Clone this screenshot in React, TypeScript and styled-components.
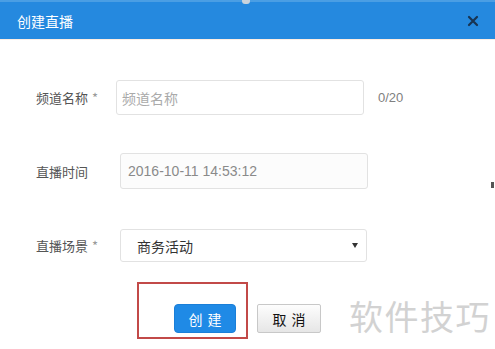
import React from "react";
import styled, { createGlobalStyle } from "styled-components";

const Global = createGlobalStyle`
  html, body { margin: 0; padding: 0; background: #fff; }
  body { font-family: "Noto Sans CJK SC", "Liberation Sans", sans-serif; overflow: hidden; }
`;

const Dialog = styled.div`
  position: relative;
  width: 495px;
  height: 349px;
  background: #fff;
  overflow: hidden;
`;

const TopStrip = styled.div`
  height: 2px;
  background: #4a9ee4;
  position: relative;
`;

const Notch = styled.div`
  position: absolute;
  left: 242px;
  top: 0;
  width: 8px;
  height: 4px;
  background: #c9d3dc;
  border-radius: 0 0 3px 3px;
`;

const Header = styled.div`
  height: 37px;
  background: #2589df;
  display: flex;
  align-items: center;
  justify-content: space-between;
  padding: 0 16px 0 17px;
  border-bottom: 1px solid #fdeee4;
`;

const Title = styled.span`
  color: #fff;
  font-size: 14px;
`;

const Close = styled.span`
  display: flex;
  width: 12px;
  height: 12px;
`;

const Body = styled.div`
  display: flex;
  flex-direction: column;
  padding-top: 40px;
`;

const Row = styled.div<{ $mt: number }>`
  display: flex;
  align-items: center;
  padding-left: 36px;
  margin-top: ${(p) => p.$mt}px;
`;

const Label = styled.span<{ $w: number }>`
  width: ${(p) => p.$w}px;
  font-size: 13px;
  color: #555;
  white-space: nowrap;
`;

const Star = styled.span`
  color: #999;
  margin-left: 4px;
`;

const Field = styled.div<{ $w: number; $h: number; $bg?: string; $color: string; $pl: number; $latin?: boolean }>`
  box-sizing: border-box;
  width: ${(p) => p.$w}px;
  height: ${(p) => p.$h}px;
  border: 1px solid #e2e2e2;
  border-radius: 3px;
  background: ${(p) => p.$bg || "#fff"};
  display: flex;
  align-items: center;
  justify-content: space-between;
  padding: 0 8px 0 ${(p) => p.$pl}px;
  font-family: ${(p) => (p.$latin ? '"Liberation Sans", sans-serif' : '"Noto Sans CJK SC", sans-serif')};
  font-size: 14px;
  color: ${(p) => p.$color};
`;

const Counter = styled.span`
  margin-left: 14px;
  font-family: "Liberation Sans", sans-serif;
  font-size: 13px;
  color: #808080;
`;

const Arrow = styled.span`
  width: 0;
  height: 0;
  border-left: 3.5px solid transparent;
  border-right: 3.5px solid transparent;
  border-top: 5px solid #333;
`;

const Actions = styled.div`
  display: flex;
  align-items: center;
  padding-left: 174px;
  margin-top: 42px;
`;

const Highlight = styled.div`
  position: relative;
  &::after {
    content: "";
    position: absolute;
    left: -37px;
    right: -12px;
    top: -22px;
    bottom: -6px;
    border: 2px solid #c24a48;
    pointer-events: none;
  }
`;

const Button = styled.button<{ $primary?: boolean }>`
  width: ${(p) => (p.$primary ? 62 : 64)}px;
  height: 29px;
  box-sizing: border-box;
  border-radius: ${(p) => (p.$primary ? 4 : 2)}px;
  border: 1px solid ${(p) => (p.$primary ? "#1a7fd8" : "#c8c8c8")};
  background: ${(p) => (p.$primary ? "#1f8ae6" : "linear-gradient(#fdfdfd, #e6e6e6)")};
  color: ${(p) => (p.$primary ? "#fff" : "#111")};
  font-family: "Noto Sans CJK SC", sans-serif;
  font-size: 14px;
  letter-spacing: 5px;
  padding: 0 0 0 5px;
  margin-left: ${(p) => (p.$primary ? 0 : 21)}px;
`;

const Watermark = styled.div`
  position: absolute;
  left: 349px;
  top: 291px;
  font-size: 34px;
  color: #d2d2d2;
  letter-spacing: 1.5px;
`;

const EdgeMark = styled.div`
  position: absolute;
  left: 491px;
  top: 182px;
  width: 3px;
  height: 6px;
  background: #555;
`;

export default function App() {
  return (
    <Dialog>
      <Global />
      <TopStrip>
        <Notch />
      </TopStrip>
      <Header>
        <Title>创建直播</Title>
        <Close>
          <svg width="12" height="12" viewBox="0 0 12 12">
            <path d="M2 2 L10 10 M10 2 L2 10" stroke="#183452" strokeWidth="2.2" strokeLinecap="round" />
          </svg>
        </Close>
      </Header>
      <Body>
        <Row $mt={0}>
          <Label $w={80}>
            频道名称<Star>*</Star>
          </Label>
          <Field $w={248} $h={35} $color="#aaa" $pl={5}>
            频道名称
          </Field>
          <Counter>0/20</Counter>
        </Row>
        <Row $mt={38}>
          <Label $w={84}>直播时间</Label>
          <Field $w={248} $h={36} $bg="#fcfcfc" $color="#8a8a8a" $pl={7} $latin>
            2016-10-11 14:53:12
          </Field>
        </Row>
        <Row $mt={40}>
          <Label $w={84}>
            直播场景<Star>*</Star>
          </Label>
          <Field $w={247} $h={33} $color="#333" $pl={16}>
            商务活动
            <Arrow />
          </Field>
        </Row>
        <Actions>
          <Highlight>
            <Button $primary>创建</Button>
          </Highlight>
          <Button>取消</Button>
        </Actions>
      </Body>
      <Watermark>软件技巧</Watermark>
      <EdgeMark />
    </Dialog>
  );
}
